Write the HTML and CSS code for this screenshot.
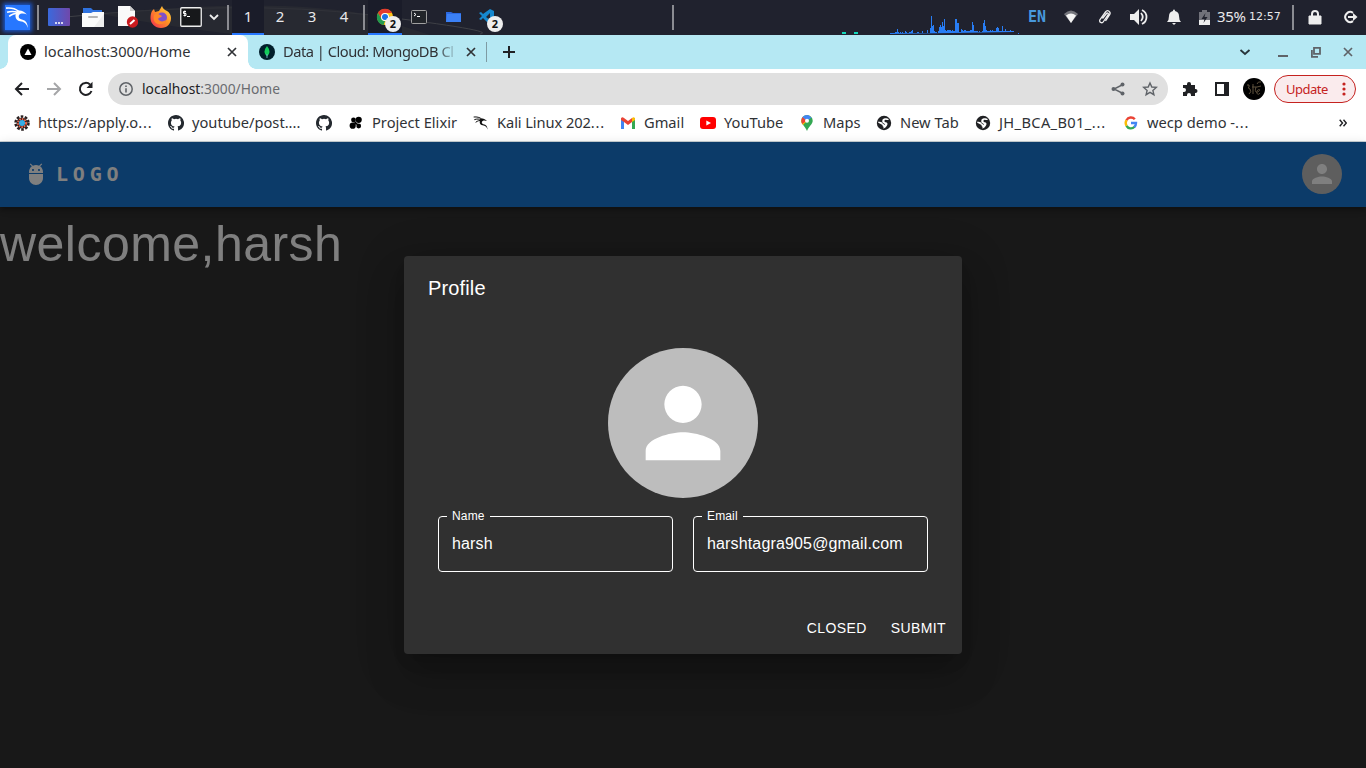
FILE: index.html
```html
<!DOCTYPE html>
<html lang="en">
<head>
<meta charset="utf-8">
<title>localhost:3000/Home</title>
<link rel="stylesheet" href="styles.css">
</head>
<body>
<svg class="defs" width="0" height="0">
  <symbol id="person" viewBox="0 0 24 24"><path d="M12 12c2.21 0 4-1.79 4-4s-1.79-4-4-4-4 1.79-4 4 1.79 4 4 4zm0 2c-2.67 0-8 1.34-8 4v2h16v-2c0-2.660-5.330-4-8-4z"/></symbol>
  <symbol id="github" viewBox="0 0 16 16"><path d="M8 0C3.580 0 0 3.580 0 8c0 3.540 2.290 6.530 5.470 7.590.4.070.55-.17.55-.38v-1.490c-2.010.370-2.530-.49-2.690-.94-.09-.23-.48-.94-.82-1.130-.28-.15-.68-.52-.01-.53.63-.01 1.080.58 1.230.82.72 1.210 1.870.87 2.330.66.070-.52.28-.87.51-1.070-1.780-.2-3.640-.89-3.640-3.950 0-.87.31-1.590.82-2.150-.08-.2-.36-1.020.08-2.120 0 0 .67-.21 2.200.82a7.400 7.400 0 0 1 4 0c1.530-1.040 2.200-.82 2.200-.82.44 1.100.16 1.920.08 2.120.51.56.82 1.270.82 2.150 0 3.070-1.870 3.750-3.650 3.950.29.25.54.73.54 1.480v2.200c0 .21.15.46.55.38A8 8 0 0 0 8 0z"/></symbol>
  <symbol id="globe" viewBox="0 0 16 16"><circle cx="8" cy="8" r="7.200" fill="#202124"/><path d="M13 4.500c-1 1-2.500 0-3.500.2C8 5 8 7 9.500 7.300c2 .2 2.500 1.200 1.500 3.200-.8 1.500-2 2.500-3.500 3.200v-2c-1-.3-1-1-1-1.700L2.300 7.800l-.3-1c2 0 3.800 0 4.300 1.200.4 1 1.700.8 2 2 .7-.4.700-1 0-1.300C6.500 8 6 7 6.300 5.500 6.500 4 8 3 9.500 3.300c1.500 0 2.500.2 3.500 1.200z" fill="#fff"/></symbol>
  <symbol id="dragon" viewBox="0 0 24 24"><path d="M1 3c5-.5 9 .5 12 3M2 7c4-1.500 7-1 11 0M4 11c3-2.500 6-3 9-3" fill="none" stroke="currentColor" stroke-width="1.500"/><path d="M12 5.500c3-1 6 .3 9 3.500-2-.8-4-1.200-6-.5-2.500 1-2.500 4.500.5 5.200 4 .8 6 2.800 6.500 8.300-1.500-4.500-3.500-6-7.500-6.500-5-.7-5.700-6.500-2.500-10z" fill="currentColor"/></symbol>
  <symbol id="cross" viewBox="0 0 10 10"><path d="M1 1l8 8M9 1 1 9" fill="none" stroke="currentColor" stroke-width="1.700"/></symbol>
</svg>

<header class="panel">
  <svg class="panel-swoosh" width="510" height="35" viewBox="0 0 510 35"><path d="M55 18Q240-1 370 15T480 34" fill="none" stroke="#3e4046" stroke-width="1"/><path d="M100 14Q270-3 365 14L430 35H240Q170 27 100 14z" fill="#2b2c33" opacity=".7"/></svg>
  <span class="cell"><span class="kali"><svg width="25" height="25"><use href="#dragon"/></svg></span></span>
  <span class="sep"></span>
  <span class="cell"><svg width="22" height="18"><defs><linearGradient id="desk"><stop stop-color="#3a69dc"/><stop offset="1" stop-color="#7048ab"/></linearGradient></defs><rect width="22" height="18" rx="1" fill="url(#desk)"/><path d="M8 15h2m1 0h2m1 0h2" transform="translate(-1)" stroke="#fff" stroke-width="1.500"/></svg></span>
  <span class="cell"><svg width="22" height="20"><path d="M1 8V1h8l2 2h9v5z" fill="#2f72df"/><path d="M0 6h9l2-1h11v15H0z" fill="#fbfbfb"/><path d="M22 7v13H12z" fill="#eee"/><rect x="6" y="9" width="10" height="2" rx="1" fill="#b5b5b5"/></svg></span>
  <span class="cell"><svg width="22" height="22"><path d="M2 0h12l5 5v15H2z" fill="#fafafa"/><path d="M14 0l5 5h-5z" fill="#ccc"/><circle cx="16.500" cy="16" r="5.700" fill="#ca1b20"/><path d="M14 18l4.500-4" stroke="#fff" stroke-width="2"/></svg></span>
  <span class="cell"><svg width="22" height="22" viewBox="0 0 22 22"><defs><linearGradient id="fx" x1="1" y1="0" x2="0" y2="1"><stop stop-color="#ffe14d"/><stop offset=".45" stop-color="#ff9223"/><stop offset="1" stop-color="#f22756"/></linearGradient></defs><path d="M2 5l2-2 1 3 4-1 3-5c1 3 3 4 5 5 2 1 4 4 4 7 0 6-4 10-10 10S.5 17.500.5 12C.5 9 1 7 2 5z" fill="url(#fx)"/><circle cx="12" cy="11.500" r="5" fill="#8050c9"/><path d="M4 9c2-2 4-1 6 0l2 1c-1 2-3 1-4 3 2 3 5 3 8 1-1 4-5 5-8 4-4-1-5-5-4-9z" fill="#ff8728"/></svg></span>
  <span class="cell term"><svg width="22" height="20"><rect x=".75" y=".75" width="20.500" height="18.500" rx="1" fill="#17181b" stroke="#eee" stroke-width="1.300"/><path d="M6 4.500H3.500v2H6v2H3.500M4.800 3.500v6M7 9.500h3" fill="none" stroke="#fff"/></svg></span>
  <span class="cell arrow"><svg width="10" height="8"><path d="M1 2l4 4 4-4" fill="none" stroke="#eee" stroke-width="1.800"/></svg></span>
  <span class="sep"></span>
  <span class="desk active">1</span><span class="desk">2</span><span class="desk">3</span><span class="desk">4</span>
  <span class="sep"></span>
  <span class="cell active"><svg width="18" height="18" viewBox="0 0 18 18"><circle cx="9" cy="9" r="8" fill="#fbc116"/><path d="M2 5a8 8 0 0 1 14 0H9L5.500 11z" fill="#e33b2e"/><path d="M2 5l4.200 7L9 13l-1.500 4A8 8 0 0 1 2 5z" fill="#229a50"/><circle cx="9" cy="9" r="4" fill="#fff"/><circle cx="9" cy="9" r="3" fill="#1a73e8"/></svg><b class="badge">2</b></span>
  <span class="cell"><svg width="16" height="14"><rect x=".5" y=".5" width="15" height="13" rx="1" fill="#22252a" stroke="#a0a0a0"/><path d="M3 3l2 1.500L3 6M6 6.500h3" fill="none" stroke="#fff"/></svg></span>
  <span class="cell"><svg width="15" height="12"><path d="M0 11V1h5l2 1h8v9z" fill="#2b68df"/><path d="M1 3h14v8H0z" fill="#3b80f5"/></svg></span>
  <span class="cell"><svg width="16" height="16"><path d="M11 0l4 2v12l-4 2-7-7-2 2-2-1 3-3-3-3 2-1 2 2z" fill="#1688ce"/><path d="M11 4v7L7 8z" fill="#232530"/></svg><b class="badge">2</b></span>
  <span class="grow"></span>
  <span class="sep"></span>
  <svg class="cpu" width="180" height="35"><path d="M0 33h4M12 33h4" stroke="#11d8bb" stroke-width="2"/><path d="M48 34V33h5v-1h2v-3h1v3h1v1h1v-1h1v1h1v-1h1v1h2v-2h1v1h1v1h2v-1h2v-1h1v-1h1v3h4v-1h2v1h3v-2h1v2h4v-3h1v3h2v-5h1V16h1v10h1v-1h1v6h1v1h2v1h1v-2h1v-4h1v-2h1v2h1v-5h1v4h1v-7h1v11h1v1h1v-1h4v1h1v-1h1v1h2V19h2v4h2v9h2v-3h1v1h1v1h1v-1h2v1h4v-1h2v-8h1v3h1v6h4v1h1v-1h1v1h2v-1h1v-8h1v-3h1v6h1v4h1v1h3v-1h1v1h1v-1h1v1h3v-3h1v-1h1v1h1v3h3v-5h1v5h2v-2h1v2h4v-1h1v1h3v1zM176 33h1v1h-1z" fill="#287df4"/></svg>
  <span class="lang">EN</span>
  <span class="cell tray"><svg width="16" height="14"><path d="M1 4Q8-3 15 4L8 13z" fill="#74757c"/><path d="M3 5.500q5-4 10 0L8 13z" fill="#f4f4f4"/></svg></span>
  <span class="cell"><svg width="16" height="18" viewBox="0 0 16 18"><path d="M5.500 10.500 9.500 5.500c1-1.200 2.500 0 1.700 1.200L6.500 13.500c-1.500 2.500-5 .5-3.500-2L8.500 4c2-2.800 6-.3 4 2.800L8.500 13" fill="none" stroke="#eee" stroke-width="1.300"/></svg></span>
  <span class="cell"><svg width="20" height="18"><path d="M1 6h4l5-5v16l-5-5H1z" fill="#eee"/><path d="M12 5q3.500 4 0 8M13 2c6 3 6 11 0 14" fill="none" stroke="#eee" stroke-width="1.800"/></svg></span>
  <span class="cell bell"><svg width="16" height="16"><path d="M1 13q2-2 2-6 0-4 4-5c0-2 2-2 2 0q4 1 4 5 0 4 2 6zM6 14h4l-2 2z" fill="#eee"/></svg></span>
  <span class="cell batt"><svg width="11" height="15"><path d="M0 2h3V0h5v2h3v13H0z" fill="#71727a"/><path d="M0 10h11v5H0z" fill="#eee"/><path d="M6.500 3 2.500 9h3l-1 4 4-6h-3z" fill="#20222d"/></svg></span>
  <span class="pct">35%</span><span class="clock">12:57</span>
  <span class="sep"></span>
  <span class="cell lock"><svg width="14" height="16"><path d="M1 7h12v8H1z" fill="#eee" stroke="#eee" stroke-width="1"/><path d="M4 7V5q0-3 3-3t3 3v2" fill="none" stroke="#eee" stroke-width="2"/></svg></span>
  <span class="cell out"><svg width="16" height="14"><path d="M11 2.800a5 5 0 1 0 0 8.400" fill="none" stroke="#eee" stroke-width="2"/><path d="M6 6h5V3l4.500 4L11 11V8H6z" fill="#eee"/></svg></span>
</header>

<div class="tabs">
  <div class="tab current"><svg width="16" height="16"><circle cx="8" cy="8" r="8"/><path d="M8 4.500 11.500 11h-7z" fill="#fff"/></svg><span class="tab-title">localhost:3000/Home</span><svg class="x" width="10" height="10"><use href="#cross"/></svg></div>
  <div class="tab second"><svg width="16" height="16"><circle cx="8" cy="8" r="8" fill="#011e2b"/><path d="M8 2q5 6 0 10.500Q3 8 8 2z" fill="#13ca5b"/><path d="M8 10v4" stroke="#8bd" stroke-width=".8"/></svg><span class="tab-title fade">Data | Cloud: MongoDB Cl</span><svg class="x" width="10" height="10"><use href="#cross"/></svg></div>
  <span class="tab-line"></span>
  <svg class="plus" width="12" height="12"><path d="M6 0v12M0 6h12" stroke="#202124" stroke-width="2"/></svg>
  <span class="grow"></span>
  <div class="win">
    <svg width="12" height="12"><path d="M1.500 4 6 8l4.500-4" fill="none" stroke="#27343a" stroke-width="1.800"/></svg>
    <svg width="12" height="12"><path d="M1 10h10" stroke="#5f6368" stroke-width="2"/></svg>
    <svg width="12" height="12"><path d="M4 1.900h6v6H4zM1.900 4v6.900H8" fill="none" stroke="#5f6368" stroke-width="1.800"/></svg>
    <svg class="close" width="10" height="10"><use href="#cross"/></svg>
  </div>
</div>

<div class="toolbar">
  <svg width="16" height="16"><path d="M15 8H2M8 2 2 8l6 6" fill="none" stroke="#202124" stroke-width="2"/></svg>
  <svg width="16" height="16"><path d="M1 8h13M8 2l6 6-6 6" fill="none" stroke="#a5a6a8" stroke-width="2"/></svg>
  <svg width="16" height="16"><path d="M13.500 10A6 6 0 1 1 12 3.500" fill="none" stroke="#202124" stroke-width="2"/><path d="M14.500.8V7H8.500z" fill="#202124"/></svg>
  <div class="address">
    <svg width="14" height="14"><circle cx="7" cy="7" r="6.200" fill="none" stroke="#5f6368" stroke-width="1.500"/><path d="M7 6.200v4.300M7 3.500V5" stroke="#5f6368" stroke-width="1.600"/></svg>
    <span class="url"><b>localhost</b>:3000/Home</span>
    <span class="grow"></span>
    <svg width="14" height="14" class="share"><path d="M12 2.500 3 7l9 4.500" fill="none" stroke="#5f6368" stroke-width="1.400"/><g fill="#5f6368"><circle cx="11.500" cy="2.500" r="2"/><circle cx="2.500" cy="7" r="2"/><circle cx="11.500" cy="11.500" r="2"/></g></svg>
    <svg width="16" height="16"><path d="M8 2l1.800 4 4.500.4-3.400 3 1 4.300L8 11.400l-3.900 2.300 1-4.300-3.400-3 4.500-.4z" fill="none" stroke="#5f6368" stroke-width="1.400"/></svg>
  </div>
  <svg class="puzzle" width="16" height="16"><path d="M1 4h4V3a2 2 0 0 1 4 0v1h4v4h.5a2 2 0 0 1 0 4H13v3H9v-1a2 2 0 0 0-4 0v1H1v-4h1a2 2 0 0 0 0-4H1z" fill="#202124"/></svg>
  <svg width="14" height="14"><path d="M1 1h12v12H1z" fill="none" stroke="#202124" stroke-width="2"/><path d="M9 1h5v12H9z" fill="#202124"/></svg>
  <svg width="22" height="22"><circle cx="11" cy="11" r="11" fill="#000"/><path d="M4 7q3-1 2 2-2 1 1 2 2 3-1 5M10 6v10M9 9h5l4-1M18 4q-3-1-4 2M13 9c-2 6 1 6 3 4s-1-2-2 0 1 5 3 2" fill="none" stroke="#5c503c" stroke-width="1"/></svg>
  <div class="update"><span>Update</span><svg width="4" height="14"><g fill="#c5221f"><circle cx="2" cy="2" r="1.600"/><circle cx="2" cy="7" r="1.600"/><circle cx="2" cy="12" r="1.600"/></g></svg></div>
</div>

<nav class="bookmarks">
  <a class="bm w114"><svg width="16" height="16"><g fill="none" stroke="#2a2020"><circle cx="8" cy="8" r="6.500" stroke-width="2.500" stroke-dasharray="2.600 1.480"/></g><circle cx="8" cy="8" r="5.500" fill="#2a2020"/><circle cx="8" cy="8" r="4" fill="none" stroke="#ee6549" stroke-width="2" stroke-dasharray="1.600 1"/><circle cx="8" cy="8" r="3" fill="#35aee8"/></svg><span>https://apply.o<i>...</i></span></a>
  <a class="bm w108"><svg width="16" height="16" fill="#24292f"><use href="#github"/></svg><span>youtube/post....</span></a>
  <a class="bm"><svg width="16" height="16" fill="#24292f"><use href="#github"/></svg></a>
  <a class="bm w85"><svg width="16" height="16"><circle cx="5.500" cy="5" r="2.400"/><circle cx="10.700" cy="4.800" r="3.100"/><circle cx="4.700" cy="10.700" r="3.100"/><circle cx="10.700" cy="11" r="2.400"/><path d="M7 6l3 3-2 1-2-2z"/></svg><span>Project Elixir</span></a>
  <a class="bm w107"><svg width="16" height="16"><use href="#dragon"/></svg><span>Kali Linux 202<i>...</i></span></a>
  <a class="bm w40"><svg width="16" height="16"><path d="M1 3v11h3V5z" fill="#4285f4"/><path d="M12 5v9h3V3z" fill="#34a853"/><path d="M1 3.500q1-2 3-.5l4 3 4-3v4l-4 3-4-3-3-2z" fill="#ea4335"/><path d="M12 3q2-1.500 3 .5V5l-3 2z" fill="#fbbc04"/></svg><span>Gmail</span></a>
  <a class="bm w59"><svg width="16" height="16"><rect y="2" width="16" height="12" rx="3" fill="#f00"/><path d="M6.300 5.500v5L11 8z" fill="#fff"/></svg><span>YouTube</span></a>
  <a class="bm w37"><svg width="16" height="16"><path d="M8 0a5.700 5.700 0 0 0-5.700 5.700C2.300 9 6 11 8 16c2-5 5.700-7 5.700-10.300A5.700 5.700 0 0 0 8 0z" fill="#34a853"/><path d="M12 1.700 4 10Q2.300 8 2.300 5.700L6 .5z" fill="#fbbc04"/><path d="M3.500 2 8 5.500 3 9Q1.500 5 3.500 2z" fill="#ea4335"/><path d="M3.500 2Q8-2 12.500 2.500L8 6z" fill="#4285f4"/><circle cx="8" cy="5.700" r="2" fill="#fff"/></svg><span>Maps</span></a>
  <a class="bm w59"><svg width="16" height="16"><use href="#globe"/></svg><span>New Tab</span></a>
  <a class="bm w108 jh"><svg width="16" height="16"><use href="#globe"/></svg><span>JH_BCA_B01_<i>...</i></span></a>
  <a class="bm w102"><svg width="16" height="16" fill="none" stroke-width="2.400"><path d="M3.500 5.200A5 5 0 0 1 11.800 4.300" stroke="#ea4335"/><path d="M3.500 5.200a5.500 5.500 0 0 0 0 5.600" stroke="#fbbc04"/><path d="M3.500 10.800a5 5 0 0 0 8 1" stroke="#34a853"/><path d="M8 8h5q0 2.500-1.700 4" stroke="#4285f4"/></svg><span>wecp demo -<i>...</i></span></a>
  <span class="grow"></span>
  <svg class="more" width="8" height="8"><path d="M.7.800 3.500 4 .7 7.200M4.500.800 7.300 4 4.500 7.200" fill="none" stroke="#202124" stroke-width="1.400"/></svg>
</nav>

<main class="app">
  <div class="appbar">
    <svg width="24" height="24" viewBox="0 0 24 24" fill="#fff"><path d="M5 16c0 3.870 3.130 7 7 7s7-3.130 7-7v-4H5v4zM16.120 4.370l2.100-2.100-.82-.83-2.300 2.310C14.160 3.280 13.120 3 12 3s-2.160.28-3.090.75L6.600 1.440l-.82.83 2.100 2.100C6.140 5.640 5 7.680 5 10v1h14v-1c0-2.320-1.140-4.360-2.880-5.630zM9 9c-.55 0-1-.45-1-1s.45-1 1-1 1 .45 1 1-.45 1-1 1zm6 0c-.55 0-1-.45-1-1s.45-1 1-1 1 .45 1 1-.45 1-1 1z"/></svg>
    <span class="brand">LOGO</span>
    <span class="grow"></span>
    <span class="avatar"><svg><use href="#person"/></svg></span>
  </div>
  <h1 class="welcome">welcome,harsh</h1>
  <div class="backdrop">
    <section class="dialog">
      <h2>Profile</h2>
      <span class="avatar large"><svg><use href="#person"/></svg></span>
      <div class="fields">
        <fieldset><legend>Name</legend><span>harsh</span></fieldset>
        <fieldset><legend>Email</legend><span>harshtagra905@gmail.com</span></fieldset>
      </div>
      <div class="actions"><span>CLOSED</span><span>SUBMIT</span></div>
    </section>
  </div>
</main>
</body>
</html>
```
FILE: styles.css
```css
* { box-sizing: border-box; }
body { margin: 0; width: 1366px; height: 768px; overflow: hidden; display: flex; flex-direction: column; font-family: "Noto Sans", sans-serif; color: #303236; }
svg { flex: none; display: block; }
.defs { position: absolute; }
.grow { flex: 1; }

.panel { height: 35px; flex: none; display: flex; background: #20222e; position: relative; color: #e8e8ea; align-items: stretch; }
.panel > * { flex: none; }
.panel-swoosh { position: absolute; left: 0; top: 0; }
.cell { width: 34px; display: flex; align-items: center; justify-content: center; position: relative; padding-bottom: 1px; }
.kali { width: 25px; height: 25px; background: #2777ff; box-shadow: 0 0 4px 2px #1b55c7; color: #fff; }
.sep { width: 8px; display: flex; justify-content: center; align-items: center; position: relative; }
.sep::before { content: ""; width: 2px; height: 25px; background: #8b8c92; }
.term { width: 26px; }
.arrow { width: 20px; }
.desk { width: 32px; font-size: 15px; line-height: 33px; text-align: center; position: relative; }
.active { background: #1a1c29; box-shadow: inset 0 -2px #2777ff; }
.badge { position: absolute; left: 17px; top: 16px; width: 16px; height: 16px; border-radius: 50%; background: #eee; color: #111; font-size: 11px; line-height: 16px; text-align: center; }
.panel > .grow { width: 165px; }
.cpu { margin-left: 165px; }
.lang { margin-left: 6px; width: 26px; font: bold 15px/35px "DejaVu Sans Mono", monospace; color: #4898dc; }
.tray { width: 34px; }
.bell { width: 36px; }
.batt { width: 25px; }
.pct { width: 32px; font-size: 15px; line-height: 33px; letter-spacing: -.3px; }
.clock { width: 40px; font: 11px/32px "DejaVu Sans", sans-serif; padding-top: 1px; }
.lock { width: 36px; }

.tabs { height: 34px; flex: none; background: #b5e8f3; display: flex; align-items: center; padding-left: 8px; }
.tab { display: flex; align-items: center; height: 34px; font-size: 14.667px; }
.tab-title { white-space: nowrap; overflow: hidden; margin-left: 8px; padding-bottom: 2px; }
.current { width: 240px; background: #fff; border-radius: 8px 8px 0 0; padding-left: 12px; position: relative; }
.current::before, .current::after { content: ""; position: absolute; bottom: 0; width: 8px; height: 8px; }
.current::before { left: -8px; background: radial-gradient(circle at 0 0, #b5e8f3 7.500px, #fff 8px); }
.current::after { right: -8px; background: radial-gradient(circle at 100% 0, #b5e8f3 7.500px, #fff 8px); }
.current .tab-title { width: 183px; }
.second { width: 238px; padding-left: 11px; }
.fade { width: 175px; margin-right: 8px; letter-spacing: -.48px; -webkit-mask-image: linear-gradient(90deg, #000 88%, transparent); mask-image: linear-gradient(90deg, #000 88%, transparent); }
.x { color: #303236; }
.tab-line { width: 1px; height: 20px; background: #7e9ba3; }
.plus { margin-left: 16px; }
.win { display: flex; gap: 23px; align-items: center; padding-right: 13px; }
.win svg:first-child { margin-right: 3px; }
.win svg:nth-child(-n+2) { position: relative; left: 2px; }
.win .close { color: #5f6368; margin-left: -2px; }

.toolbar { height: 39px; flex: none; background: #fff; display: flex; align-items: center; padding: 1px 10px 0 14px; gap: 16px; }
.address { height: 32px; width: 1060px; margin-left: -2px; border-radius: 16px; background: #e0e0e0; display: flex; align-items: center; padding: 0 10px 0 11px; font-size: 13.8px; }
.url { margin-left: 9px; padding-bottom: 1px; color: #6a6c70; }
.url b { font-weight: 400; color: #202124; }
.share { margin-right: 17px; }
.puzzle { margin-left: -2px; }
.toolbar > .puzzle + svg { margin-left: 1px; }
.toolbar > .puzzle + svg + svg { margin-left: -2px; }
.update { width: 82px; height: 28px; margin-left: -7px; border: 1px solid #c5221f; border-radius: 14px; background: #faebed; color: #c5221f; font-size: 13px; letter-spacing: -.5px; display: flex; align-items: center; justify-content: space-between; padding: 0 9px 0 11px; }

.bookmarks { height: 34px; flex: none; background: #fff; border-bottom: 1px solid #cbd2d6; display: flex; align-items: center; gap: 16px; padding: 0 19px 4px 14px; font-size: 14.667px; }
.bm { display: flex; gap: 8px; align-items: center; }
.bm span { white-space: nowrap; padding-bottom: 2px; }
.bm i { font-style: normal; letter-spacing: .8px; }
.bm svg { color: #111; }
.w114 span { width: 114px; } .w108 span { width: 108px; } .w107 span { width: 107px; letter-spacing: -.08px; } .w102 span { width: 102px; }
.w85 span { width: 85px; } .w59 span { width: 59px; } .w40 span { width: 40px; } .w37 span { width: 37px; }
.jh span { letter-spacing: .35px; }

.app { flex: 1; background: #303030; color: #fff; position: relative; font-family: "Liberation Sans", Arial, sans-serif; }
.appbar { height: 65px; background: #1976d2; padding: 0 24px 1px; display: flex; align-items: center; box-shadow: 0 2px 4px -1px rgba(0,0,0,.2), 0 4px 5px rgba(0,0,0,.14), 0 1px 10px rgba(0,0,0,.12); position: relative; }
.brand { margin-left: 8px; font: bold 20px/32px "DejaVu Sans Mono", monospace; letter-spacing: 4.8px; }
.avatar { width: 40px; height: 40px; border-radius: 50%; background: #bdbdbd; fill: #fff; display: flex; align-items: center; justify-content: center; }
.avatar svg { width: 75%; height: 75%; }
.appbar .avatar svg { width: 30px; height: 30px; }
.welcome { margin: 0; font-size: 50px; font-weight: 400; line-height: 75px; letter-spacing: .00938em; }
.backdrop { position: absolute; inset: 0; background: rgba(0,0,0,.5); display: flex; align-items: center; justify-content: center; }
.dialog { width: 558px; height: 398px; background: #303030; border-radius: 4px; box-shadow: 0 11px 15px -7px rgba(0,0,0,.2), 0 24px 38px 3px rgba(0,0,0,.14), 0 9px 46px 8px rgba(0,0,0,.12); display: flex; flex-direction: column; }
.dialog h2 { margin: 0; height: 64px; padding: 16px 24px; font-size: 20px; line-height: 32px; font-weight: 400; letter-spacing: .0075em; }
.large { width: 150px; height: 150px; margin: 28px auto 0; }
.avatar.large svg { width: 112px; height: 112px; }
.fields { display: flex; gap: 20px; padding: 10px 34px 0; }
fieldset { width: 235px; height: 64px; min-width: 0; margin: 0; padding: 0 13px; border: 1px solid #fff; border-radius: 4px; font-size: 16px; letter-spacing: .00938em; }
legend { margin-left: -5px; padding: 0 5px; font-size: 12px; line-height: 16px; letter-spacing: .15px; }
fieldset span { display: block; line-height: 24px; margin-top: 8px; }
.actions { margin-top: auto; display: flex; justify-content: flex-end; gap: 24px; padding: 0 16px 14px; font-size: 14px; line-height: 24px; letter-spacing: .4px; }
```
